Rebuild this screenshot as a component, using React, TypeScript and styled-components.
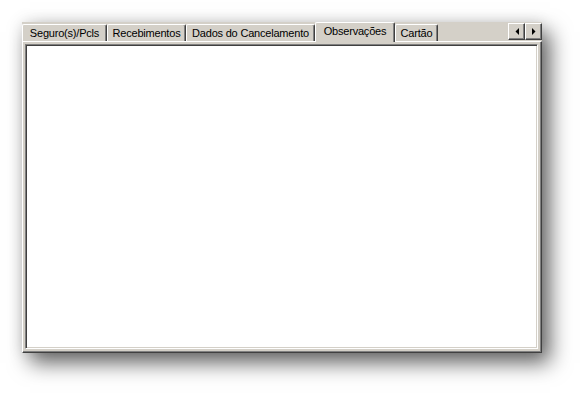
import React from "react";
import styled, { createGlobalStyle } from "styled-components";

const Global = createGlobalStyle`
  html, body { margin: 0; padding: 0; background: #ffffff; }
  body { font-family: "Liberation Sans", Arial, sans-serif; }
`;

const Page = styled.div`
  width: 584px;
  height: 395px;
  padding: 22px 0 0 22px;
  box-sizing: border-box;
  background: #ffffff;
`;

const Window = styled.div`
  width: 520px;
  background: #d4d0c8;
  display: flex;
  flex-direction: column;
  box-shadow: 8px 10px 20px rgba(0, 0, 0, 0.6), 0 0 14px rgba(0, 0, 0, 0.1);
`;

const TabStrip = styled.div`
  height: 19px;
  display: flex;
  align-items: flex-end;
  position: relative;
  z-index: 2;
`;

const Tab = styled.div<{ $w: number; $active?: boolean }>`
  width: ${(p) => p.$w}px;
  height: ${(p) => (p.$active ? 20 : 17)}px;
  margin-bottom: ${(p) => (p.$active ? -1 : 0)}px;
  box-sizing: border-box;
  background: #d4d0c8;
  border-top: 1px solid #ffffff;
  border-left: 1px solid #ffffff;
  border-right: 1px solid #404040;
  box-shadow: inset -1px 0 0 #808080;
  border-top-left-radius: 2px;
  border-top-right-radius: 2px;
  display: flex;
  justify-content: center;
  align-items: ${(p) => (p.$active ? "flex-start" : "center")};
  padding-top: ${(p) => (p.$active ? 2 : 0)}px;
  font-size: 11px;
  letter-spacing: -0.2px;
  color: #000000;
  white-space: nowrap;
  line-height: 13px;
`;

const Spacer = styled.div`
  flex: 1;
`;

const ScrollButtons = styled.div`
  display: flex;
  align-self: flex-start;
  margin-top: 1px;
`;

const ScrollButton = styled.div`
  width: 17px;
  height: 17px;
  box-sizing: border-box;
  background: #d4d0c8;
  border-top: 1px solid #ffffff;
  border-left: 1px solid #ffffff;
  border-right: 1px solid #404040;
  border-bottom: 1px solid #404040;
  box-shadow: inset -1px -1px 0 #808080;
  display: flex;
  align-items: center;
  justify-content: center;
`;

const Panel = styled.div`
  height: 312px;
  box-sizing: border-box;
  border-top: 1px solid #ffffff;
  border-left: 1px solid #ffffff;
  border-right: 1px solid #404040;
  border-bottom: 1px solid #404040;
  box-shadow: inset -1px -1px 0 #808080;
  padding: 2px 3px 3px 2px;
  display: flex;
`;

const Memo = styled.div`
  flex: 1;
  background: #ffffff;
  border-top: 1px solid #808080;
  border-left: 1px solid #808080;
  border-right: 1px solid #ffffff;
  border-bottom: 1px solid #ffffff;
  box-shadow: inset 1px 1px 0 #404040, inset -1px -1px 0 #d4d0c8;
`;

const Arrow = ({ dir }: { dir: "left" | "right" }) => (
  <svg width="4" height="7" viewBox="0 0 4 7">
    {dir === "left" ? (
      <polygon points="4,0 4,7 0.5,3.5" fill="#000" />
    ) : (
      <polygon points="0,0 0,7 3.5,3.5" fill="#000" />
    )}
  </svg>
);

const tabs = [
  { label: "Seguro(s)/Pcls", w: 85 },
  { label: "Recebimentos", w: 79 },
  { label: "Dados do Cancelamento", w: 129 },
  { label: "Observações", w: 80, active: true },
  { label: "Cartão", w: 43 },
];

export default function App() {
  return (
    <>
      <Global />
      <Page>
        <Window>
          <TabStrip>
            {tabs.map((t) => (
              <Tab key={t.label} $w={t.w} $active={t.active}>
                {t.label}
              </Tab>
            ))}
            <Spacer />
            <ScrollButtons>
              <ScrollButton>
                <Arrow dir="left" />
              </ScrollButton>
              <ScrollButton>
                <Arrow dir="right" />
              </ScrollButton>
            </ScrollButtons>
          </TabStrip>
          <Panel>
            <Memo />
          </Panel>
        </Window>
      </Page>
    </>
  );
}
